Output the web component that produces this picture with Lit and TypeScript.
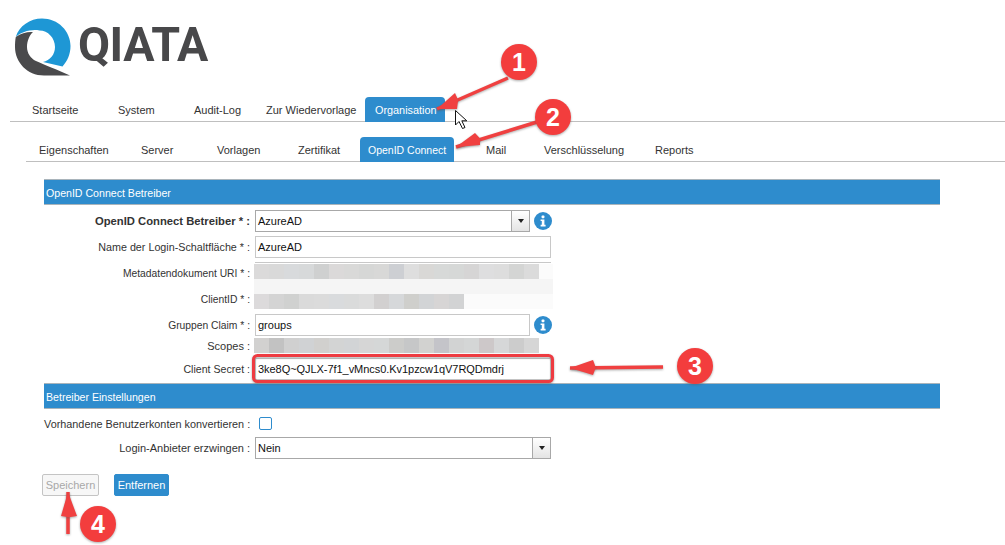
import { LitElement, html, css, svg } from "lit";
import { customElement } from "lit/decorators.js";

const mainTabs: [string, number, boolean][] = [
  ["Startseite", 86, false],
  ["System", 76, false],
  ["Audit-Log", 72, false],
  ["Zur Wiedervorlage", 109, false],
  ["Organisation", 80, true],
];
const subTabs: [string, number, boolean][] = [
  ["Eigenschaften", 102, false],
  ["Server", 76, false],
  ["Vorlagen", 81, false],
  ["Zertifikat", 70, false],
  ["OpenID Connect", 118, true],
  ["Mail", 58, false],
  ["Verschlüsselung", 111, false],
  ["Reports", 60, false],
];

const rowA = ["#dbdada","#d9d9d9","#d8dadc","#d7d9da","#cfd0d0","#dbd9d9","#d9d9d8","#d6d7d6","#d8d8d7","#cdcfd3","#dedede","#d9d8d6","#d7d9d8","#d6d8d7","#d6d5d5","#dededf","#dddddd","#d4d5d4","#dbdbdb"];
const rowC = ["#dcdadb","#d4d4d4","#d0d1d0","#dadada","#dbdbdb","#d9dbdd","#dadbdb","#dddddd","#d2d0d0","#d6d8da","#cfcfcc","#d2d4d6","#d7d5d5","#d2d3d4"];
const rowS = ["#d2d1d0","#c2c2c2","#d0d0d0","#d0d2d4","#d1d0ce","#d3d4d4","#d2d4d6","#d6d6d6","#d5d7d7","#ccccca","#c6c7c8","#d2d2d0","#c4c4c9","#d2d3d3","#d4d6d6","#cdc8c9","#d6d7d8","#cccccc","#d6d6d6"];

const arrow = (x1: number, y1: number, x2: number, y2: number, hx1: number, hy1: number, hx2: number, hy2: number) => svg`
  <path class="ann" d="M${x1} ${y1} L${x2} ${y2}" stroke="#f04040" stroke-width="3.5" fill="none"/>
  <path class="ann" d="M${x2} ${y2} L${hx1} ${hy1} L${(hx1 + hx2) / 2 + (x1 - x2) * 0.03} ${(hy1 + hy2) / 2 + (y1 - y2) * 0.03} L${hx2} ${hy2} Z" fill="#f04040"/>
`;
const badge = (cx: number, cy: number, n: string) => svg`
  <circle class="ann" cx=${cx} cy=${cy} r="18" fill="#f33d3d"/>
  <text class="num" x=${cx} y=${cy + 8.5} text-anchor="middle">${n}</text>
`;

@customElement("app-root")
export class AppRoot extends LitElement {
  static styles = css`
    :host {
      display: block;
      position: relative;
      width: 1005px;
      height: 545px;
      overflow: hidden;
      background: #fff;
      font: 11px "Liberation Sans", Arial, sans-serif;
      color: #333;
      --blue: #2e8ccd;
    }
    .logo {
      height: 97px;
      box-sizing: border-box;
      padding: 18px 0 0 15px;
      display: flex;
      align-items: flex-start;
      gap: 7px;
    }
    .logo svg { display: block; flex: none; }
    .word {
      font: 700 48px/1 Roboto, "Liberation Sans", sans-serif;
      color: #48484a;
      letter-spacing: -0.5px;
      margin-top: 3px;
      transform: scaleX(0.97);
      transform-origin: left center;
    }
    .tabs {
      display: flex;
      border-bottom: 1px solid #bfbfbf;
      height: 24px;
    }
    .tabs.main { margin-left: 10px; padding-left: 12px; }
    .tabs.sub { margin: 15px 0 0 26px; padding-left: 5px; }
    .tab {
      box-sizing: border-box;
      line-height: 26px;
      white-space: nowrap;
      flex: none;
    }
    .main .tab { padding-left: 10px; }
    .sub .tab { padding-left: 8px; }
    .tab.active span {
      display: inline-block;
      background: var(--blue);
      color: #fff;
      height: 25px;
      border-radius: 4px 4px 0 0;
    }
    .main .tab.active { padding: 0; }
    .main .tab.active span { padding: 0 10px; width: 80px; box-sizing: border-box; font-size: 10.85px; }
    .sub .tab.active { padding: 0; }
    .sub .tab.active span { padding: 0 8px; width: 94px; box-sizing: border-box; font-size: 10.5px; }
    .form {
      margin: 17px 0 0 44px;
      width: 896px;
    }
    .head {
      box-sizing: border-box;
      height: 26px;
      background: var(--blue);
      border-top: 1px solid #a9b4bb;
      border-bottom: 1px solid #a9b4bb;
      color: #fff;
      padding-left: 2px;
      line-height: 27px;
      font-size: 10.6px;
    }
    .row {
      display: grid;
      grid-template-columns: 207px 1fr;
      column-gap: 4px;
      align-items: center;
      height: 22px;
    }
    .label { text-align: right; white-space: nowrap; padding-right: 1px; }
    .label.strong { font-weight: 700; font-size: 11.25px; }
    .label.name { font-size: 10.75px; }
    .label.tight { font-size: 10.3px; }
    .label.secret { font-size: 10.6px; }
    .label.wide { font-size: 10.85px; }
    .field {
      display: flex;
      align-items: center;
      gap: 4px;
    }
    .input {
      box-sizing: border-box;
      width: 296px;
      height: 22px;
      border: 1px solid #c8c8c8;
      background: #fff;
      color: #111;
      padding-left: 2px;
      line-height: 21px;
      white-space: nowrap;
      position: relative;
    }
    .input.short { width: 275px; }
    .input.select { border-color: #a8a8a8; }
    .input.code { letter-spacing: -0.05px; }
    .arrow {
      position: absolute;
      right: 0;
      top: 0;
      bottom: 0;
      width: 17px;
      border-left: 1px solid #a8a8a8;
      background: linear-gradient(#fff, #e4e4e4);
      display: flex;
      align-items: center;
      justify-content: center;
    }
    .arrow::after {
      content: "";
      border: 3.5px solid transparent;
      border-top: 4px solid #222;
      border-bottom: 0;
    }
    .info { display: block; flex: none; }
    .r1 { margin-top: 5px; }
    .r2 { margin-top: 4px; }
    .blurred { margin-top: 4px; }
    .blurred-top {
      margin-left: 211px;
      width: 296px;
      height: 1px;
      background: #c8c8c8;
    }
    .stripe-row {
      display: grid;
      grid-template-columns: 207px 1fr;
      column-gap: 3px;
      align-items: start;
      height: 15px;
    }
    .stripe-row.first { margin-top: 1px; }
    .stripe-row .label { line-height: 20px; height: 15px; }
    .stripe-row .label.up { line-height: 12px; }
    .stripe {
      display: flex;
      width: 299px;
      height: 15px;
      background: #fbfbfb;
    }
    .stripe.light { background: #f5f5f5; }
    .cell { width: 15px; height: 15px; flex: none; }
    .r-groups { margin-top: 5px; }
    .r-scopes { margin-top: 2px; height: 15px; column-gap: 3px; }
    .r-scopes .stripe { background: #fff; }
    .r-secret { margin-top: 5px; }
    .head.second { margin-top: 3px; }
    .r-check { margin-top: 8px; height: 13px; }
    .check {
      box-sizing: border-box;
      width: 13px;
      height: 13px;
      margin-left: 4px;
      border: 1px solid var(--blue);
      border-radius: 2px;
      background: #fff;
    }
    .r-login { margin-top: 7px; }
    .buttons {
      margin: 15px 0 0 -2px;
      display: flex;
      gap: 15px;
    }
    .btn {
      box-sizing: border-box;
      height: 22px;
      line-height: 20px;
      text-align: center;
      border-radius: 2px;
      border: 1px solid var(--blue);
      background: var(--blue);
      color: #fff;
      width: 55px;
    }
    .btn.off {
      width: 57px;
      background: #f7f7f7;
      border-color: #c4c4c4;
      color: #a8a8a8;
    }
    .overlay {
      position: absolute;
      inset: 0;
      pointer-events: none;
    }
    .ann { filter: drop-shadow(0 1px 1px rgba(90, 90, 90, 0.5)); }
    .num {
      font: 700 25px "Liberation Sans", Arial, sans-serif;
      fill: #fff;
    }
  `;

  private tabRow(kind: string, tabs: [string, number, boolean][]) {
    return html`<div class="tabs ${kind}">
      ${tabs.map(
        ([t, w, a]) => html`<div class="tab ${a ? "active" : ""}" style="width:${w}px">
          ${a ? html`<span>${t}</span>` : t}
        </div>`
      )}
    </div>`;
  }

  private info() {
    return html`<svg class="info" width="18" height="18" viewBox="0 0 18 18">
      <circle cx="9" cy="9" r="9" fill="#2e8ccd"/>
      <rect x="7.6" y="3.6" width="2.8" height="2.6" rx="0.6" fill="#fff"/>
      <path d="M6.6 7.4h3.8v5.4h1.2v1.6H6.6v-1.6h1.2V9H6.6z" fill="#fff"/>
    </svg>`;
  }

  private cells(colors: string[]) {
    return colors.map((c) => html`<span class="cell" style="background:${c}"></span>`);
  }

  render() {
    return html`
      <div class="logo">
        <svg width="56" height="58" viewBox="15 18 56 58">
          <path fill="#1e97d5" d="M15.8 37 C19 26 30 18.5 42 18.5 C58 18.5 70.5 31 70.5 46 C70.5 54 67.5 61 62.5 66.5 L43 62 C50 60.5 55 54.500 55 47 C55 38 48 30.500 39.500 30.500 C31 29 21 32 15.800 37 Z"/>
          <path fill="#4a4a4c" d="M15.800 37 C21 33 28 31.500 33 32 C29.500 35 27 41 27 47 C27 53 30.500 58.500 36 61 C45 65 58 70 70 75.500 L44 75.500 C27 75.500 15 62 15 47 C15 43.500 15.200 40 15.800 37 Z"/>
        </svg>
        <div class="word">QIATA</div>
      </div>

      ${this.tabRow("main", mainTabs)}
      ${this.tabRow("sub", subTabs)}

      <div class="form">
        <div class="head">OpenID Connect Betreiber</div>

        <div class="row r1">
          <div class="label strong">OpenID Connect Betreiber * :</div>
          <div class="field">
            <div class="input short select">AzureAD<span class="arrow"></span></div>
            ${this.info()}
          </div>
        </div>
        <div class="row r2">
          <div class="label name">Name der Login-Schaltfläche * :</div>
          <div class="input">AzureAD</div>
        </div>

        <div class="blurred">
          <div class="blurred-top"></div>
          <div class="stripe-row first">
            <div class="label tight">Metadatendokument URI * :</div>
            <div class="stripe">${this.cells(rowA)}</div>
          </div>
          <div class="stripe-row">
            <div class="label"></div>
            <div class="stripe light"></div>
          </div>
          <div class="stripe-row">
            <div class="label tight up">ClientID * :</div>
            <div class="stripe">${this.cells(rowC)}</div>
          </div>
        </div>

        <div class="row r-groups">
          <div class="label tight">Gruppen Claim * :</div>
          <div class="field">
            <div class="input short">groups</div>
            ${this.info()}
          </div>
        </div>
        <div class="row r-scopes">
          <div class="label">Scopes :</div>
          <div class="stripe">${this.cells(rowS)}</div>
        </div>
        <div class="row r-secret">
          <div class="label secret">Client Secret :</div>
          <div class="input code">3ke8Q~QJLX-7f1_vMncs0.Kv1pzcw1qV7RQDmdrj</div>
        </div>

        <div class="head second">Betreiber Einstellungen</div>

        <div class="row r-check">
          <div class="label wide">Vorhandene Benutzerkonten konvertieren :</div>
          <div class="check"></div>
        </div>
        <div class="row r-login">
          <div class="label">Login-Anbieter erzwingen :</div>
          <div class="input select">Nein<span class="arrow"></span></div>
        </div>

        <div class="buttons">
          <div class="btn off">Speichern</div>
          <div class="btn">Entfernen</div>
        </div>
      </div>

      <svg class="overlay" width="1005" height="545" viewBox="0 0 1005 545">
        <rect class="ann" x="253.500" y="355.500" width="299" height="26" rx="4" fill="none" stroke="#ee3b41" stroke-width="3"/>
        ${arrow(508, 78, 437, 109, 455, 93, 457, 109)}
        ${arrow(537, 122, 456, 147, 475, 133, 480, 145)}
        ${arrow(663, 367, 570, 368, 593, 360, 593, 375)}
        ${arrow(68, 534, 68, 492, 61, 516, 77, 516)}
        ${badge(519, 62, "1")}
        ${badge(553, 117, "2")}
        ${badge(695, 366, "3")}
        ${badge(98, 524, "4")}
        <path d="M455.500 110.500 V125 L459 121.500 L462.500 128.500 L465 127.500 L461.800 120.800 L466.800 120.800 Z" fill="#fff" stroke="#111" stroke-width="1"/>
      </svg>
    `;
  }
}
